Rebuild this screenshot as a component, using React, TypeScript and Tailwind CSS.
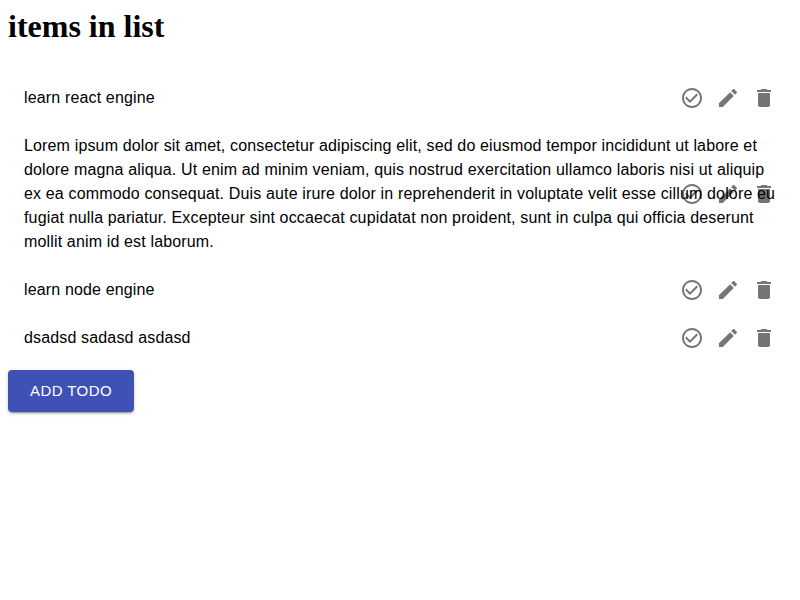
const icons = {
  check:
    "M16.59 7.58L10 14.17l-3.59-3.58L5 12l5 5 8-8zM12 2C6.48 2 2 6.48 2 12s4.48 10 10 10 10-4.48 10-10S17.52 2 12 2zm0 18c-4.42 0-8-3.58-8-8s3.58-8 8-8 8 3.58 8 8-3.58 8-8 8z",
  edit: "M3 17.25V21h3.75L17.81 9.94l-3.75-3.75L3 17.25zM20.71 7.04c.39-.39.39-1.02 0-1.41l-2.34-2.34a.9959.9959 0 00-1.41 0l-1.83 1.83 3.75 3.75 1.83-1.83z",
  remove: "M6 19c0 1.1.9 2 2 2h8c1.1 0 2-.9 2-2V7H6v12zM19 4h-3.5l-1-1h-5l-1 1H5v2h14V4z",
};

const todos = [
  "learn react engine",
  "Lorem ipsum dolor sit amet, consectetur adipiscing elit, sed do eiusmod tempor incididunt ut labore et dolore magna aliqua. Ut enim ad minim veniam, quis nostrud exercitation ullamco laboris nisi ut aliquip ex ea commodo consequat. Duis aute irure dolor in reprehenderit in voluptate velit esse cillum dolore eu fugiat nulla pariatur. Excepteur sint occaecat cupidatat non proident, sunt in culpa qui officia deserunt mollit anim id est laborum.",
  "learn node engine",
  "dsadsd sadasd asdasd",
];

function IconButton({ label, path }: { label: string; path: string }) {
  return (
    <button aria-label={label} className="block p-1.5">
      <svg viewBox="0 0 24 24" className="size-6 fill-current">
        <path d={path} />
      </svg>
    </button>
  );
}

function TodoItem({ text }: { text: string }) {
  return (
    <li className="relative px-4 py-3">
      <p className="text-base leading-6 tracking-[0.00938em]">{text}</p>
      <div className="absolute top-1/2 right-2.5 flex -translate-y-1/2 text-black/54">
        <IconButton label="complete" path={icons.check} />
        <IconButton label="edit" path={icons.edit} />
        <IconButton label="delete" path={icons.remove} />
      </div>
    </li>
  );
}

export default function App() {
  return (
    <main className="min-h-screen bg-white px-2 pt-2 font-['Liberation_Sans',Arial,sans-serif] text-black">
      <h1 className="font-['Liberation_Serif',serif] text-[32px] leading-[37px] font-bold">items in list</h1>
      <ul className="mt-[29px]">
        {todos.map((text) => (
          <TodoItem key={text} text={text} />
        ))}
      </ul>
      <button className="mt-2 rounded bg-[#3f51b5] px-[22px] py-2 text-[15px] leading-[26px] font-medium tracking-[0.02857em] text-white uppercase shadow-[0px_3px_1px_-2px_rgba(0,0,0,0.2),0px_2px_2px_0px_rgba(0,0,0,0.14),0px_1px_5px_0px_rgba(0,0,0,0.12)]">
        Add todo
      </button>
    </main>
  );
}
